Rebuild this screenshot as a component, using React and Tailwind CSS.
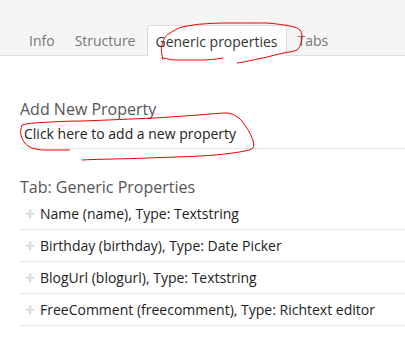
export default function App() {
  const rows = [
    "Name (name), Type: Textstring",
    "Birthday (birthday), Type: Date Picker",
    "BlogUrl (blogurl), Type: Textstring",
    "FreeComment (freecomment), Type: Richtext editor",
  ];
  return (
    <div className="relative w-[405px] h-[349px] bg-white overflow-hidden" style={{ fontFamily: '"Open Sans", sans-serif' }}>
      <div className="h-[56px] bg-[#f5f5f5] border-b border-[#e0e0e0] flex items-end pl-[19px]">
        <div className="flex items-end text-[14px] text-[#777]">
          <div className="px-[10px] h-[30px] flex items-center">Info</div>
          <div className="px-[10px] h-[30px] flex items-center">Structure</div>
          <div className="ml-[2px] pl-[7px] pr-[8px] h-[31px] -mb-px flex items-center bg-white border border-b-0 border-[#dcdcdc] rounded-t-[3px] text-[#343434]">Generic properties</div>
          <div className="pl-[11px] pr-[10px] h-[30px] flex items-center">Tabs</div>
        </div>
      </div>
      <div className="pl-[20px] pt-[42px]">
        <div className="text-[16px] text-[#555] leading-[22px]">Add New Property</div>
        <div className="text-[14px] text-[#222] leading-[20px] pl-[4px] pt-[4px] pb-[4px] border-b border-[#e9e9e9]">Click here to add a new property</div>
        <div className="mt-[27px] text-[16px] text-[#555] leading-[22px]">Tab: Generic Properties</div>
        <div>
          {rows.map((r) => (
            <div key={r} className="h-[32px] flex items-center border-b border-[#e9e9e9]">
              <span className="w-[20px] flex justify-center text-[#ccc] text-[12px]">✛</span>
              <span className="text-[14px] text-[#222]">{r}</span>
            </div>
          ))}
        </div>
      </div>
      <svg className="absolute left-0 top-0 pointer-events-none" width="405" height="349" fill="none" stroke="#e00" strokeWidth="1">
        <path d="M163 60 C161 52 161 45 162 45 C164 38 166 35 170 33 C176 29 180 27 187 26 C194 25 198 24 203 24 C215 23 225 23 230 23 C245 23 255 23 267 23 C278 24 285 25 290 26 C295 27 298 28 300 30 C302 33 302 35 302 38 C301 44 300 47 297 50 C293 52 288 52 283 53 C276 55 270 56 263 58 C252 60 245 62 237 63" />
        <path d="M163 58 C168 59 172 60 177 60 C185 60 192 60 200 60 C210 60 216 59 223 58" />
        <path d="M22 125 C26 124 30 123 35 123 C50 122 65 121 82 121 C110 120 130 119 155 118 C170 117 185 116 198 115 C210 114 220 113 228 113 C234 114 238 117 242 121 C246 127 250 132 252 138 C254 142 254 146 253 148 C251 150 248 150 245 151 C235 153 225 154 215 155 C190 157 170 157 148 158 C125 159 100 159 82 160" />
        <path d="M22 125 C21 128 20 132 21 135 C22 140 25 144 28 146 C33 149 39 150 45 150 C53 150 62 150 70 150" />
      </svg>
    </div>
  );
}
